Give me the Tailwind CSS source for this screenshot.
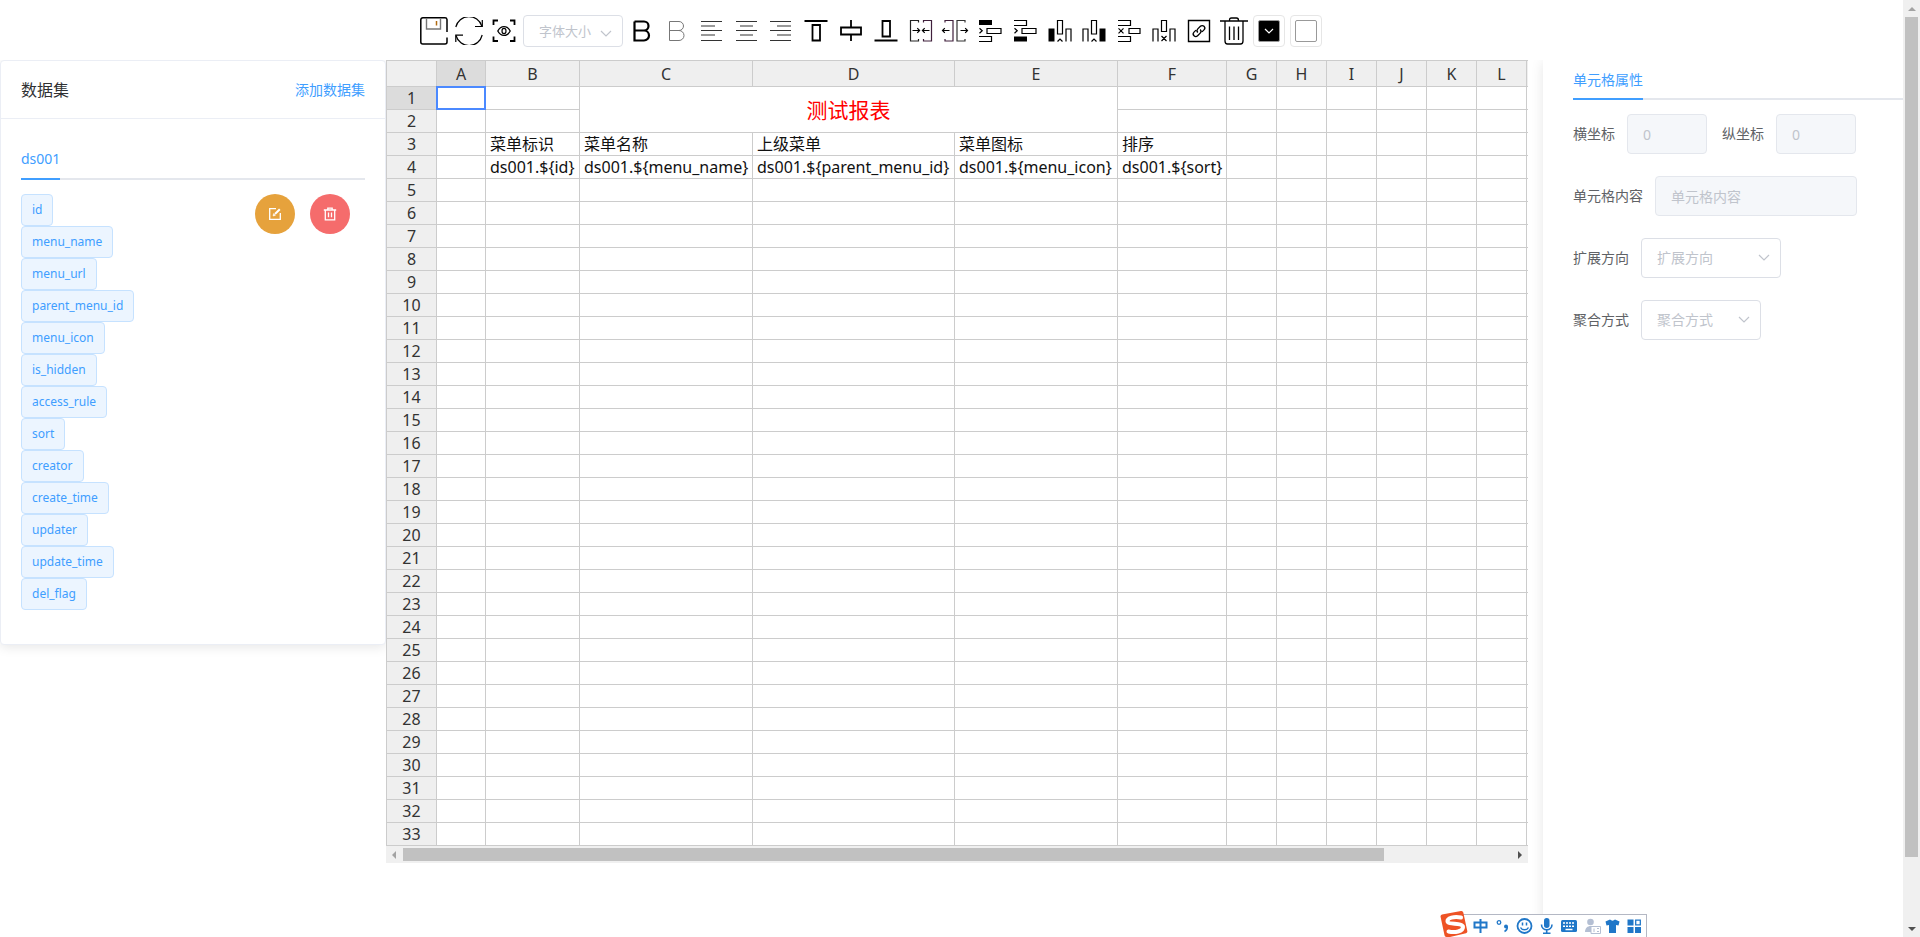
<!DOCTYPE html>
<html lang="zh-CN">
<head>
<meta charset="utf-8">
<title>报表设计器</title>
<script src="https://cdn.jsdelivr.net/npm/@tailwindcss/browser@4"></script>
</head>
<body class="flex h-screen overflow-hidden bg-white font-['Noto_Sans','Noto_Sans_CJK_SC',sans-serif] text-sm text-[#606266]">

<div class="flex min-w-0 flex-1 flex-col overflow-hidden">
  <!-- Toolbar -->
  <header class="relative z-10 flex h-15 shrink-0 items-center bg-white pt-0.5 pl-[417px] text-black">
    <div class="grid w-[104px] grid-cols-3 justify-items-center">
      <button type="button" aria-label="保存"><svg class="size-7" viewBox="0 0 28 28" fill="none" stroke="currentColor"><path stroke-width="1.5" d="M27 15V2.5A2 2 0 0 0 25 .8H2.8a2 2 0 0 0-2 2V25a2 2 0 0 0 2 2H25a2 2 0 0 0 2-2v-4.500"/><path stroke="#777" stroke-width="1.400" d="M6.500 1v11h14V1"/><path stroke="#b06a10" stroke-width="1.500" d="M16.500 4v4.500"/></svg></button>
      <button type="button" aria-label="刷新"><svg class="size-7" viewBox="0 0 28 28" fill="none" stroke="currentColor" stroke-width="1.200"><path d="M.8 10A13.500 13.500 0 0 1 26.800 9M27.200 18A13.500 13.500 0 0 1 1 18.500"/><path d="M27.300 3v6.500H20M.8 25v-6.800H8"/></svg></button>
      <button type="button" aria-label="预览"><svg class="size-7" viewBox="0 0 28 28" fill="none" stroke="currentColor"><path stroke-width="1.800" d="M3.500 8V3.500H8M20 3.500h4.500V8M24.500 19.500V24H20M8 24H3.500v-4.500"/><path stroke-width="1.300" d="M7.800 14C9.300 11 11.500 9.600 14 9.600S18.700 11 20.200 14c-1.500 3-3.700 4.400-6.200 4.400S9.300 17 7.800 14z"/><ellipse cx="14" cy="14" rx="2" ry="2.600" stroke-width="1.200"/></svg></button>
    </div>
    <div class="relative ml-0.5 w-25">
      <select aria-label="字体大小" class="h-8 w-full appearance-none rounded border border-[#dcdfe6] bg-white pl-[15px] text-[13px] text-[#c0c4cc]"><option>字体大小</option></select>
      <svg class="pointer-events-none absolute top-[13px] right-[11px] h-2.5 w-3" viewBox="0 0 12 10" fill="none" stroke="#c0c4cc" stroke-width="1.200"><path d="M1 3l5 5 5-5"/></svg>
    </div>
    <div class="ml-0.5 grid w-[626px] grid-cols-[repeat(18,minmax(0,1fr))] justify-items-center">
      <button type="button" aria-label="加粗"><svg class="size-7" viewBox="0 0 28 28" fill="none" stroke="currentColor" stroke-width="2.200"><path d="M6.500 4.500h9.500a4.500 4.500 0 0 1 0 9H6.500M16 13.500a5 5 0 0 1 0 10H6.500v-19"/></svg></button>
      <button type="button" aria-label="取消加粗"><svg class="size-7" viewBox="0 0 28 28" fill="none" stroke="#777"><path d="M6.500 4.500h9.500a4.500 4.500 0 0 1 0 9H6.500M16 13.500a5 5 0 0 1 0 10H6.500v-19"/></svg></button>
      <button type="button" aria-label="左对齐"><svg class="size-7" viewBox="0 0 28 28" fill="none"><path stroke="#333" d="M3 4.500h21M3 13.500h21M3 23.500h21"/><path stroke="#999" stroke-width="2" d="M3 9h14M3 18h14"/></svg></button>
      <button type="button" aria-label="水平居中"><svg class="size-7" viewBox="0 0 28 28" fill="none"><path stroke="#333" d="M3 4.500h21M3 13.500h21M3 23.500h21"/><path stroke="#999" stroke-width="2" d="M7 9h13M7 18h13"/></svg></button>
      <button type="button" aria-label="右对齐"><svg class="size-7" viewBox="0 0 28 28" fill="none"><path stroke="#333" d="M3 4.500h21M3 13.500h21M3 23.500h21"/><path stroke="#999" stroke-width="2" d="M10 9h14M10 18h14"/></svg></button>
      <button type="button" aria-label="顶端对齐"><svg class="size-7" viewBox="0 0 28 28" fill="none" stroke="currentColor" stroke-width="1.800"><path d="M2.500 4h23M10.500 8h7.500v15.500h-7.500z"/></svg></button>
      <button type="button" aria-label="垂直居中"><svg class="size-7" viewBox="0 0 28 28" fill="none" stroke="currentColor" stroke-width="1.800"><path d="M4 10.500h20v7H4zM14 3v7.500M14 17.500V24"/></svg></button>
      <button type="button" aria-label="底端对齐"><svg class="size-7" viewBox="0 0 28 28" fill="none" stroke="currentColor" stroke-width="1.800"><path d="M2.500 23.500h23M10.500 4h7.500v15.500h-7.500z"/></svg></button>
      <button type="button" aria-label="合并单元格"><svg class="size-7" viewBox="0 0 28 28" fill="none" stroke-width="1.200"><path stroke="#222" d="M11.500 5.500v-2h-8V24h8v-2"/><path stroke="#40203c" d="M16.500 5.500v-2h8V24h-8v-2"/><path stroke="#000" d="M5.500 13.500h7M10.300 11.200l2.300 2.300-2.300 2.300M22.500 13.500h-7M17.700 11.200l-2.300 2.300 2.300 2.300"/></svg></button>
      <button type="button" aria-label="拆分单元格"><svg class="size-7" viewBox="0 0 28 28" fill="none" stroke-width="1.200"><path stroke="#40203c" d="M4 5.500v-2h8V24H4v-2"/><path stroke="#333" d="M24 5.500v-2h-8V24h8v-2"/><path stroke="#000" d="M8.500 13.500H1.500M3.800 11.200l-2.300 2.300 2.300 2.300M19.500 13.500h7M24.200 11.200l2.300 2.300-2.300 2.300"/></svg></button>
      <button type="button" aria-label="上方插入行"><svg class="size-7" viewBox="0 0 28 28" fill="none" stroke="currentColor" stroke-width="1.200"><path fill="currentColor" stroke="none" d="M3 3h13v5H3z"/><path d="M3.500 11.200l2.700 2.500-2.700 2.500M11 11.500h14v5H11zM3 19.500h12.500v5H3"/></svg></button>
      <button type="button" aria-label="下方插入行"><svg class="size-7" viewBox="0 0 28 28" fill="none" stroke="currentColor" stroke-width="1.200"><path fill="currentColor" stroke="none" d="M3 19.500h13v5H3z"/><path d="M3.500 11.200l2.700 2.500-2.700 2.500M11 11.500h14v5H11zM3 3.500h12.500v5H3"/></svg></button>
      <button type="button" aria-label="左侧插入列"><svg class="size-7" viewBox="0 0 28 28" fill="none" stroke="currentColor" stroke-width="1.200"><path fill="currentColor" stroke="none" d="M2.500 11.500h6v13h-6z"/><path d="M11.500 3.500h5v13.500h-5zM20 24.500V12h5v12.500M11.500 24.500l2.500-2.500 2.500 2.500"/></svg></button>
      <button type="button" aria-label="右侧插入列"><svg class="size-7" viewBox="0 0 28 28" fill="none" stroke="currentColor" stroke-width="1.200"><path fill="currentColor" stroke="none" d="M19.500 11.500h6v13h-6z"/><path d="M11.500 3.500h5v13.500h-5zM3 24.500V12h5v12.500M11.500 24.500l2.500-2.500 2.500 2.500"/></svg></button>
      <button type="button" aria-label="删除行"><svg class="size-7" viewBox="0 0 28 28" fill="none" stroke="currentColor" stroke-width="1.200"><path d="M3 3.500h12.500v5H3M3.500 11.300l5 5M8.500 11.300l-5 5M14 11.500h11v5H14zM3 19.500h12.500v5H3"/></svg></button>
      <button type="button" aria-label="删除列"><svg class="size-7" viewBox="0 0 28 28" fill="none" stroke="currentColor" stroke-width="1.200"><path d="M11.500 3.500h5v11h-5zM3 24.500V12h5v12.500M20 24.500V12h5v12.500M11.500 19l5 5M16.500 19l-5 5"/></svg></button>
      <button type="button" aria-label="超链接"><svg class="size-7" viewBox="0 0 28 28" fill="none" stroke="currentColor"><path stroke-width="1.400" d="M3.500 3.500h21v21h-21z"/><path stroke-width="1.300" d="M12.800 15.500a2.600 2.600 0 0 1 0-3.600l2.600-2.600a2.500 2.500 0 0 1 3.600 3.600l-2 2M15.200 12.500a2.600 2.600 0 0 1 0 3.600l-2.600 2.600A2.500 2.500 0 0 1 9 15.100l2-2"/></svg></button>
      <button type="button" aria-label="清空"><svg class="size-7" viewBox="0 0 28 28" fill="none" stroke="currentColor" stroke-width="1.300"><path d="M0 4h28M9.500 3.500c0-2 .5-2.500 2-2.500h5c1.500 0 2 .5 2 2.500M5 4.500V24c0 2 .8 3 2.500 3h13c1.700 0 2.500-1 2.500-3V4.500"/><path d="M9.500 9.500V23M14 9.500V23M18.500 9.500V23"/></svg></button>
    </div>
    <button type="button" aria-label="字体颜色" class="ml-0.5 flex size-8 items-center justify-center rounded border border-[#e6e6e6]"><span class="flex size-[22px] items-center justify-center rounded-xs border border-[#999] bg-black"><svg class="size-3" viewBox="0 0 12 12" fill="none" stroke="#fff" stroke-width="1.200"><path d="M2 4l4 4 4-4"/></svg></span></button>
    <button type="button" aria-label="背景颜色" class="ml-[5px] flex size-8 items-center justify-center rounded border border-[#e6e6e6]"><span class="size-[22px] rounded-xs border border-[#999] bg-white"></span></button>
  </header>

  <main class="flex min-h-0 flex-1">
    <!-- Data sets -->
    <aside class="w-[386px] shrink-0 self-start rounded border border-[#ebeef5] bg-white shadow-[0_2px_12px_0_rgba(0,0,0,0.1)]">
      <div class="flex h-[58px] items-center justify-between border-b border-[#ebeef5] px-5">
        <h2 class="text-base text-[#303133]">数据集</h2>
        <button type="button" class="text-sm text-[#409eff]">添加数据集</button>
      </div>
      <div class="px-5 pt-[21px] pb-[34px]">
        <div class="flex h-10 border-b-2 border-[#e4e7ed]" role="tablist">
          <button type="button" role="tab" class="-mb-0.5 h-10 border-b-2 border-[#409eff] text-sm text-[#409eff]">ds001</button>
        </div>
        <div class="mt-3.5 flex items-start justify-between">
          <ul id="fields" class="flex flex-col items-start"></ul>
          <div class="flex gap-[15px] pr-[15px] text-white">
            <button type="button" aria-label="编辑" class="flex size-10 items-center justify-center rounded-full bg-[#e6a23c]"><svg class="size-3.5" viewBox="0 0 14 14" fill="none" stroke="currentColor" stroke-width="1.300"><path d="M8 1.700H1.700v10.600h10.600V6"/><path stroke-width="2" d="M11.800 2.200L7 7"/><path d="M5 9l.6-2.400L7.400 8.400z" fill="currentColor" stroke-width=".5"/></svg></button>
            <button type="button" aria-label="删除" class="flex size-10 items-center justify-center rounded-full bg-[#f56c6c]"><svg class="size-3.5" viewBox="0 0 14 14" fill="none" stroke="currentColor" stroke-width="1.300"><path d="M.8 3h12.400M4.800 2.800V1.200h4.400v1.600M2.300 3v9.800h9.400V3M5.500 5.500v4.800M8.500 5.500v4.800"/></svg></button>
          </div>
        </div>
      </div>
    </aside>

    <!-- Spreadsheet -->
    <section class="z-10 mr-[15px] min-w-0 flex-1 self-start overflow-hidden bg-white">
      <table class="w-[1191px] table-fixed border-separate border-spacing-0 border-t border-l border-[#ccc] text-base leading-[22px] text-[#111]">
        <colgroup>
          <col class="w-[50px]"><col class="w-[49px]"><col class="w-[94px]"><col class="w-[173px]"><col class="w-[202px]"><col class="w-[163px]"><col class="w-[109px]"><col class="w-[50px]"><col class="w-[50px]"><col class="w-[50px]"><col class="w-[50px]"><col class="w-[50px]"><col class="w-[50px]"><col class="w-[50px]">
        </colgroup>
        <thead><tr id="letters" class="h-[26px]"></tr></thead>
        <tbody id="cells"></tbody>
      </table>
      <div class="flex h-[17px] items-center bg-[#f0f0f0]">
        <svg class="h-2 w-[17px]" viewBox="0 0 17 8"><path fill="#a3a3a3" d="M10 0v8L6 4z"/></svg>
        <div class="flex-1"><div class="h-[13px] w-[88.5%] bg-[#c1c1c1]"></div></div>
        <svg class="h-2 w-[17px]" viewBox="0 0 17 8"><path fill="#505050" d="M7 0v8l4-4z"/></svg>
      </div>
    </section>

    <!-- Cell properties -->
    <aside class="w-[360px] shrink-0 bg-white pl-[30px] shadow-[0_2px_12px_0_rgba(0,0,0,0.1)]">
      <div class="flex h-10 border-b-2 border-[#e4e7ed]" role="tablist">
        <button type="button" role="tab" class="-mb-0.5 h-10 border-b-2 border-[#409eff] pt-0.5 text-sm text-[#409eff]">单元格属性</button>
      </div>
      <form class="mt-3.5 flex flex-col gap-[22px]">
        <div class="flex gap-[15px]">
          <div class="flex items-center gap-3"><label for="px">横坐标</label><input id="px" disabled value="0" class="h-10 w-20 rounded border border-[#e4e7ed] bg-[#f5f7fa] px-[15px] text-[#c0c4cc]"></div>
          <div class="flex items-center gap-3"><label for="py">纵坐标</label><input id="py" disabled value="0" class="h-10 w-20 rounded border border-[#e4e7ed] bg-[#f5f7fa] px-[15px] text-[#c0c4cc]"></div>
        </div>
        <div class="flex items-center gap-3"><label for="pc">单元格内容</label><input id="pc" disabled placeholder="单元格内容" class="h-10 w-[202px] rounded border border-[#e4e7ed] bg-[#f5f7fa] px-[15px] placeholder:text-[#c0c4cc]"></div>
        <div class="flex items-center gap-3"><label for="pd">扩展方向</label>
          <div class="relative w-35"><select id="pd" class="h-10 w-full appearance-none rounded border border-[#dcdfe6] bg-white pl-[15px] text-[#c0c4cc]"><option>扩展方向</option></select>
          <svg class="pointer-events-none absolute top-3.5 right-[11px] h-2.5 w-3" viewBox="0 0 12 10" fill="none" stroke="#c0c4cc" stroke-width="1.200"><path d="M1 3l5 5 5-5"/></svg></div></div>
        <div class="flex items-center gap-3"><label for="pa">聚合方式</label>
          <div class="relative w-30"><select id="pa" class="h-10 w-full appearance-none rounded border border-[#dcdfe6] bg-white pl-[15px] text-[#c0c4cc]"><option>聚合方式</option></select>
          <svg class="pointer-events-none absolute top-3.5 right-[11px] h-2.5 w-3" viewBox="0 0 12 10" fill="none" stroke="#c0c4cc" stroke-width="1.200"><path d="M1 3l5 5 5-5"/></svg></div></div>
      </form>
    </aside>
  </main>
</div>

<!-- Page scroll bar -->
<div class="flex w-[17px] shrink-0 flex-col items-center bg-[#f0f0f0]">
  <svg class="h-[17px] w-2 shrink-0" viewBox="0 0 8 17"><path fill="#a3a3a3" d="M0 11h8L4 7z"/></svg>
  <div class="w-full flex-1 px-0.5"><div class="h-[93%] bg-[#c1c1c1]"></div></div>
  <svg class="h-[17px] w-2 shrink-0" viewBox="0 0 8 17"><path fill="#505050" d="M0 7h8l-4 4z"/></svg>
</div>

<!-- Input method bar -->
<div class="fixed right-[273px] bottom-0 z-20 flex h-[23px] w-[186px] items-center border-t border-r border-[#b4b8c4] bg-white text-[#2077c8]">
  <svg class="absolute bottom-0 -left-[22px] h-[27px] w-[30px]" viewBox="0 0 30 27"><path fill="#ee5325" d="M1.500 6.500a2 2 0 0 1 1.500-2L22 1a2 2 0 0 1 2.300 1.500l4 18.500a2 2 0 0 1-1.300 2.300L11 27H7.500a2 2 0 0 1-2-1.700z"/><path fill="none" stroke="#fff" stroke-width="4" stroke-linecap="round" d="M22 7.500C15 6 8 8 8.500 11.500s15.500 1 15.500 5.500-8 6-14.500 4.500"/></svg>
  <svg class="ml-3 h-4 w-[172px] shrink-0" viewBox="0 0 172 16" fill="none" stroke="currentColor">
    <path stroke-width="2" d="M1.500 4.500h12v5h-12zM7.500 1v14"/>
    <circle cx="26" cy="4.500" r="1.800" stroke-width="1.300"/><circle cx="33" cy="8.500" r="2" fill="currentColor" stroke="none"/><path stroke-width="1.500" d="M34.300 8.500c.2 2.500-.8 4-2.800 5"/>
    <circle cx="51.500" cy="8" r="7" stroke-width="1.800"/><path stroke-width="1.500" d="M49.500 4.500v3M53.500 4.500v3M47.500 9.500c1.500 3 6.500 3 8 0"/>
    <rect x="71" y="0" width="5.500" height="10" rx="2.700" fill="currentColor" stroke="none"/><path stroke-width="1.600" d="M68.500 6.500c0 7 10.500 7 10.500 0M73.700 12v3.500M70 15.200h7.500"/>
    <rect x="88" y="2" width="16" height="12" rx="1.500" fill="currentColor" stroke="none"/><path stroke="#fff" stroke-width="1.500" stroke-dasharray="2 1" d="M90 5h12M90 8.200h12"/><path stroke="#fff" stroke-width="1.500" d="M92.500 11.500h7"/>
    <g fill="#b4bfd3" stroke="none"><circle cx="117.500" cy="4" r="3.300"/><path d="M112 14c0-8 11-8 11 0z"/></g><path stroke="#b4bfd3" fill="#fff" d="M118 8.500h9.500v7H118z"/><path stroke="#b4bfd3" d="M121 10.500v3.500M124 10.500h2M124 13.500h2"/>
    <path fill="currentColor" stroke="none" d="M137 1.500c1.500 1.500 3.500 1.500 5 0l4.500 2-1 4-2.500-.5v8h-7V7l-2.500.5-1-4z"/>
    <path fill="currentColor" stroke="none" d="M154.500 1.500h6v6h-6zM154.500 9h6v6h-6zM162 9h6v6h-6z"/><path stroke-width="1.300" d="M162.700 2.200h4.600v4.600h-4.600z"/>
  </svg>
</div>

<script>
  const names = ['id','menu_name','menu_url','parent_menu_id','menu_icon','is_hidden','access_rule','sort','creator','create_time','updater','update_time','del_flag'];
  document.getElementById('fields').innerHTML = names.map(n =>
    `<li class="h-8 rounded border border-[#c6e2ff] bg-[#ecf5ff] px-2.5 text-xs leading-[30px] text-[#409eff]">${n}</li>`).join('');

  const head = 'h-[26px] border-r border-b border-[#ccc] bg-[#efefef] p-0 text-center font-normal text-[#333]';
  const headOn = 'h-[26px] border-r border-b border-[#ccc] bg-[#dcdcdc] p-0 text-center font-normal text-[#333]';
  const rowHead = 'h-[23px] border-r border-b border-[#ccc] bg-[#efefef] p-0 text-center font-normal text-[#333]';
  const rowHeadOn = 'h-[23px] border-r border-b border-[#ccc] bg-[#dcdcdc] p-0 text-center font-normal text-[#333]';
  const cell = 'h-[23px] border-r border-b border-[#ccc] p-0 pl-1 whitespace-nowrap';

  document.getElementById('letters').innerHTML = ['', ...'ABCDEFGHIJKL', ''].map(c =>
    `<th scope="col" class="${c === 'A' ? headOn : head}">${c}</th>`).join('');

  const data = {
    3: ['', '菜单标识', '菜单名称', '上级菜单', '菜单图标', '排序'],
    4: ['', 'ds001.${id}', 'ds001.${menu_name}', 'ds001.${parent_menu_id}', 'ds001.${menu_icon}', 'ds001.${sort}']
  };
  let html = '';
  for (let r = 1; r <= 33; r++) {
    html += `<tr><th scope="row" class="${r === 1 ? rowHeadOn : rowHead}">${r}</th>`;
    for (let c = 0; c < 13; c++) {
      if (r <= 2 && c >= 2 && c <= 4) {
        if (r === 1 && c === 2) html += '<td colspan="3" rowspan="2" class="border-r border-b border-[#ccc] p-0 text-center text-[21px] text-[#f00]">测试报表</td>';
        continue;
      }
      if (r === 1 && c === 0) {
        html += '<td class="relative h-[23px] border-r border-b border-[#ccc] p-0"><div class="absolute -inset-px border-2 border-[#4b89ff]"></div></td>';
        continue;
      }
      html += `<td class="${cell}">${(data[r] && data[r][c]) || ''}</td>`;
    }
    html += '</tr>';
  }
  document.getElementById('cells').innerHTML = html;
</script>
</body>
</html>
